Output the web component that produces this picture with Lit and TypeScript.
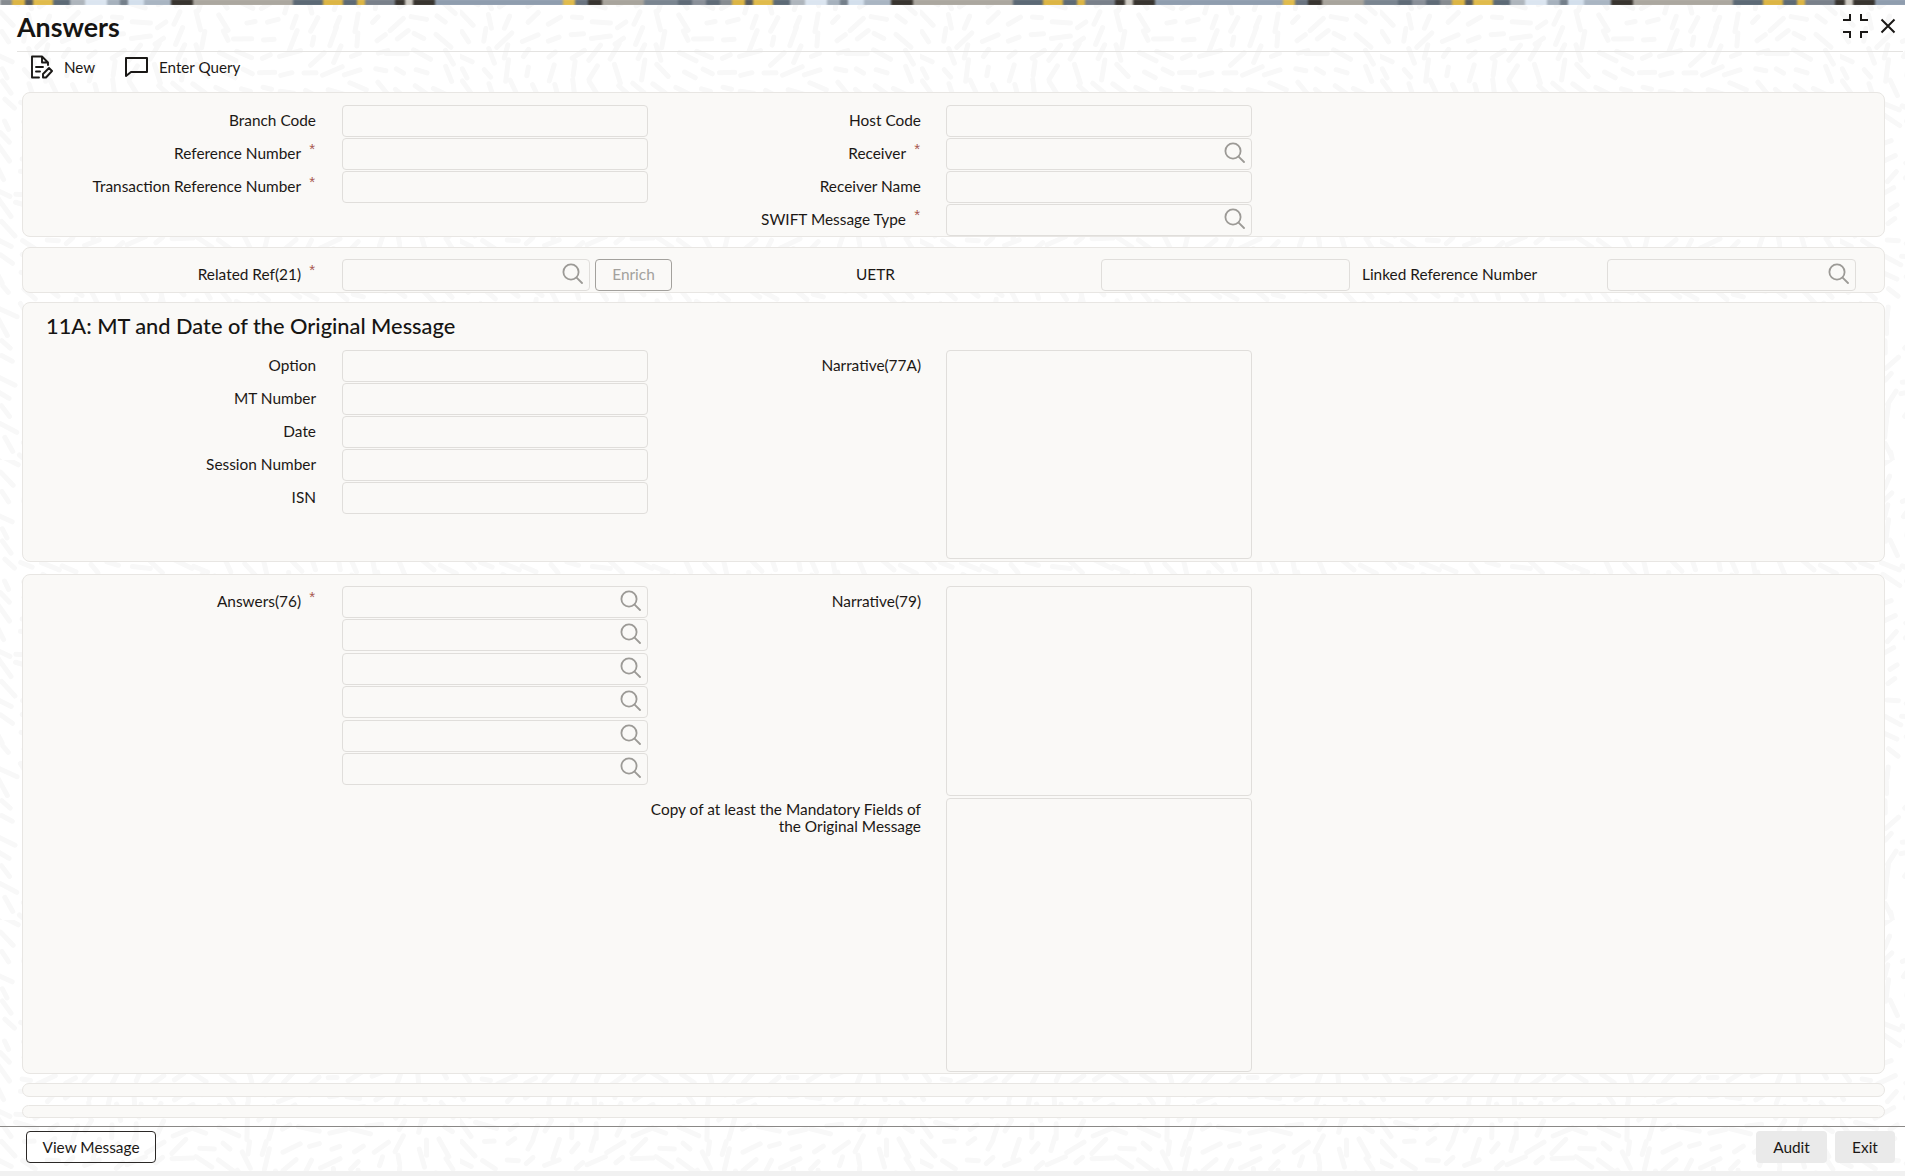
import { LitElement, html, css, svg, nothing } from "lit";
import { customElement } from "lit/decorators.js";

const bandSegs: [number, string][] = [
  [12, "#868b90"], [13, "#dcb544"], [8, "#56595c"], [20, "#e0bb4c"], [17, "#5d6a76"], [15, "#aeb5bc"],
  [22, "#dbe5f0"], [13, "#a6b1bd"], [8, "#747f8a"], [16, "#d3dfec"], [27, "#a9b5c2"], [22, "#38342f"],
  [100, "#aba79f"], [30, "#5c6975"], [20, "#dcb544"], [14, "#5c6975"], [8, "#dcb544"], [30, "#79808a"],
  [10, "#38342f"], [8, "#cfcbc4"], [22, "#38342f"], [128, "#8f9dae"], [12, "#e0bb4c"], [13, "#6a7480"],
  [14, "#38342f"], [42, "#a8a49c"], [34, "#7a8590"], [14, "#5f6b77"], [14, "#8a9099"], [14, "#5f6b77"],
];

const dashes = (() => {
  let s = 12345;
  const r = () => ((s = (s * 16807) % 2147483647) / 2147483647);
  const out: { x1: number; y1: number; x2: number; y2: number }[] = [];
  const size = 460;
  for (let gy = 0; gy < size; gy += 17) {
    for (let gx = 0; gx < size; gx += 22) {
      const flow = Math.sin(gx / 70) * Math.cos(gy / 60) * 2.4 + 0.8;
      const a = flow + (r() - 0.5) * 0.8;
      const l = 4 + r() * 7;
      const x = gx + r() * 10;
      const y = gy + r() * 8;
      out.push({ x1: x - Math.cos(a) * l, y1: y - Math.sin(a) * l, x2: x + Math.cos(a) * l, y2: y + Math.sin(a) * l });
    }
  }
  return out;
})();

const searchIcon = html`<svg class="search" viewBox="0 0 21 21" fill="none" stroke="#9c9a96" stroke-width="1.8" stroke-linecap="round"><circle cx="9" cy="9" r="7.6"></circle><path d="M14.6 14.6L20 20"></path></svg>`;

type Opt = { req?: boolean; search?: boolean };

@customElement("app-root")
export class AppRoot extends LitElement {
  static styles = css`
    :host {
      display: block;
      position: relative;
      height: 1176px;
      overflow: hidden;
      background: #fff;
      font-family: "Lato", "Noto Sans", sans-serif;
      font-size: 15.4px;
      color: #1c1815;
    }
    .backdrop { position: absolute; inset: 0; width: 100%; height: 100%; }
    .page { position: relative; display: flex; flex-direction: column; height: 100%; }
    .band { height: 5px; overflow: hidden; flex: none; }
    .band div { display: flex; height: 5px; filter: blur(0.8px); transform: scaleY(1.6); }
    .band span { flex: none; height: 100%; }
    .titlebar {
      height: 47px; margin-left: 17px; margin-right: 2px; border-bottom: 1px solid #e4e3e1; padding-bottom: 2px;
      display: flex; align-items: center; justify-content: space-between; flex: none; box-sizing: border-box;
    }
    h1 { margin: 0; font-size: 26.8px; font-weight: 700; line-height: 1; color: #161513; }
    .winctl { display: flex; align-items: center; gap: 12px; margin-right: 7px; margin-bottom: 2px; }
    .toolbar { height: 40px; padding-bottom: 10px; box-sizing: border-box; display: flex; align-items: center; padding-left: 30px; flex: none; font-size: 15.2px; }
    .tool { display: flex; align-items: center; }
    .tool.new { width: 95px; gap: 11px; }
    .tool.query { gap: 11px; }
    .panel {
      margin: 0 20px 0 22px; background: #faf9f7; border: 1px solid #e8e6e3; border-radius: 8px;
      box-sizing: border-box; flex: none;
    }
    .p1 { height: 145px; padding-top: 12px; }
    .p2 { height: 46px; margin-top: 10px; padding-top: 11px; }
    .p3 { height: 260px; margin-top: 9px; padding-top: 9px; }
    .p4 { height: 500px; margin-top: 12px; padding-top: 11px; }
    .thin { height: 14px; border-radius: 7px; }
    .t1 { margin-top: 9px; }
    .t2 { margin-top: 8px; height: 13px; }
    .cols { display: flex; }
    .col1 { width: 625px; flex: none; display: flex; flex-direction: column; gap: 1px; }
    .col2 { width: 604px; flex: none; display: flex; flex-direction: column; gap: 1px; }
    .answers { gap: 1.4px; }
    .row { display: flex; height: 32px; align-items: center; }
    .row.top { height: auto; align-items: flex-start; }
    .col1 .label { width: 293px; }
    .col2 .label { width: 273px; }
    .label {
      flex: none; display: flex; justify-content: flex-end; line-height: 17px; text-align: right; padding-bottom: 2px;
    }
    .row.top .label { padding-top: 7px; padding-bottom: 0; }
    .row.top.tight .label { padding-top: 3px; }
    .star { width: 15px; flex: none; color: #a8574f; font-size: 15px; line-height: 13px; text-align: right; padding-right: 1px; box-sizing: border-box; font-family: "Liberation Sans", sans-serif; margin-top: -3px; }
    .col1 .box { margin-left: 26px; }
    .col2 .box { margin-left: 25px; }
    .box {
      position: relative; width: 306px; height: 32px; box-sizing: border-box; flex: none;
      border: 1px solid #e0dedb; border-radius: 4px; background: #faf9f7;
    }
    .box input, textarea {
      display: block; width: 100%; height: 100%; border: 0; padding: 0 8px; margin: 0; box-sizing: border-box;
      background: transparent; outline: none; font: inherit; resize: none;
    }
    .search { position: absolute; right: 6px; top: 3px; width: 21px; height: 21px; }
    .area { height: 209px; }
    .area.a2 { height: 210px; }
    .area.a3 { height: 274px; }
    .stack { gap: 2px; }
    h2 { margin: 0 0 10px 23px; font-size: 21.8px; font-weight: 500; line-height: 28px; color: #161513; }
    .related { display: flex; align-items: center; height: 32px; }
    .related .label { width: 293px; }
    .related .box { margin-left: 26px; width: 248px; }
    .enrich {
      width: 77px; height: 32px; margin-left: 5px; box-sizing: border-box; border: 1px solid #a3a19d; border-radius: 4px;
      background: transparent; color: #a3a19d; font: inherit; padding: 0 0 2px;
    }
    .uetr { width: 429px; padding-left: 184px; padding-bottom: 2px; box-sizing: border-box; flex: none; }
    .related .uetr-box { margin-left: 0; width: 249px; }
    .linked { width: 257px; padding-left: 12px; padding-bottom: 2px; box-sizing: border-box; flex: none; }
    .footer {
      position: absolute; left: 0; right: 0; top: 1126px; height: 45px; border-top: 1px solid #8a8886; box-sizing: border-box;
      display: flex; align-items: flex-start; justify-content: space-between; padding: 4px 10px 0 26px;
    }
    .btn {
      height: 32px; box-sizing: border-box; border-radius: 4px; font: inherit; padding: 0; color: #1c1815; background: transparent;
    }
    .view { width: 130px; border: 1px solid #2b2826; }
    .right { display: flex; gap: 8px; }
    .audit, .exit { border: 0; background: #eaeaea; }
    .audit { width: 71px; }
    .exit { width: 60px; }
    .base { position: absolute; left: 0; right: 0; bottom: 0; height: 5px; background: #f1f1f1; }
  `;

  private field(label: string, o: Opt = {}) {
    return html`<div class="row">
      <div class="label"><span>${label}</span>${o.req ? html`<span class="star">*</span>` : nothing}</div>
      <div class="box"><input type="text" aria-label=${label} />${o.search ? searchIcon : nothing}</div>
    </div>`;
  }

  private area(label: string, cls: string, rowCls = "") {
    return html`<div class="row top ${rowCls}">
      <div class="label"><span>${label}</span></div>
      <div class="box area ${cls}"><textarea aria-label=${label}></textarea></div>
    </div>`;
  }

  render() {
    const segs = [...bandSegs, ...bandSegs, ...bandSegs];
    return html`
      <svg class="backdrop" aria-hidden="true">
        <defs>
          <pattern id="rice" width="460" height="460" patternUnits="userSpaceOnUse">
            ${dashes.map((d) => svg`<line x1=${d.x1} y1=${d.y1} x2=${d.x2} y2=${d.y2} stroke="#f8f8f8" stroke-width="5" stroke-linecap="round"></line>`)}
          </pattern>
        </defs>
        <rect width="100%" height="100%" fill="url(#rice)"></rect>
      </svg>
      <div class="page">
        <div class="band"><div>${segs.map(([w, c]) => html`<span style="width:${w}px;background:${c}"></span>`)}</div></div>
        <div class="titlebar">
          <h1>Answers</h1>
          <div class="winctl">
            <svg width="25" height="24" viewBox="0 0 25 24" fill="none" stroke="#1a1816" stroke-width="2">
              <path d="M0 6H7V0M18 0V6H25M25 18H18V24M7 24V18H0"></path>
            </svg>
            <svg width="16" height="16" viewBox="0 0 16 16" fill="none" stroke="#1a1816" stroke-width="2">
              <path d="M1.5 1.5L14.5 14.5M14.5 1.5L1.5 14.5"></path>
            </svg>
          </div>
        </div>
        <div class="toolbar">
          <div class="tool new">
            <svg width="23" height="24" viewBox="0 0 23 24" fill="none" stroke="#1a1816" stroke-width="1.9" stroke-linejoin="round" stroke-linecap="round">
              <path d="M9 22.5H2V1.5H12L18 7.5V10M12 1.5V7.5H18"></path>
              <path d="M6 12H13M6 16.5H10"></path>
              <path d="M13 22.5V19L19 13L22 16L16 22.5Z"></path>
            </svg>
            <span>New</span>
          </div>
          <div class="tool query">
            <svg width="23" height="20" viewBox="0 0 23 20" fill="none" stroke="#1a1816" stroke-width="2" stroke-linejoin="round">
              <path d="M1 1H22V15H6L1 19Z"></path>
            </svg>
            <span>Enter Query</span>
          </div>
        </div>
        <section class="panel p1">
          <div class="cols">
            <div class="col1">
              ${this.field("Branch Code")}
              ${this.field("Reference Number", { req: true })}
              ${this.field("Transaction Reference Number", { req: true })}
            </div>
            <div class="col2">
              ${this.field("Host Code")}
              ${this.field("Receiver", { req: true, search: true })}
              ${this.field("Receiver Name")}
              ${this.field("SWIFT Message Type", { req: true, search: true })}
            </div>
          </div>
        </section>
        <section class="panel p2">
          <div class="related">
            <div class="label"><span>Related Ref(21)</span><span class="star">*</span></div>
            <div class="box"><input type="text" aria-label="Related Ref(21)" />${searchIcon}</div>
            <button class="enrich">Enrich</button>
            <div class="uetr">UETR</div>
            <div class="box uetr-box"><input type="text" aria-label="UETR" /></div>
            <div class="linked">Linked Reference Number</div>
            <div class="box uetr-box"><input type="text" aria-label="Linked Reference Number" />${searchIcon}</div>
          </div>
        </section>
        <section class="panel p3">
          <h2>11A: MT and Date of the Original Message</h2>
          <div class="cols">
            <div class="col1">
              ${this.field("Option")}
              ${this.field("MT Number")}
              ${this.field("Date")}
              ${this.field("Session Number")}
              ${this.field("ISN")}
            </div>
            <div class="col2">${this.area("Narrative(77A)", "")}</div>
          </div>
        </section>
        <section class="panel p4">
          <div class="cols">
            <div class="col1 answers">
              ${this.field("Answers(76)", { req: true, search: true })}
              ${[1, 2, 3, 4, 5].map(() => this.field("", { search: true }))}
            </div>
            <div class="col2 stack">
              ${this.area("Narrative(79)", "a2")}
              ${this.area("Copy of at least the Mandatory Fields of the Original Message", "a3", "tight")}
            </div>
          </div>
        </section>
        <div class="panel thin t1"></div>
        <div class="panel thin t2"></div>
        <div class="footer">
          <button class="btn view">View Message</button>
          <div class="right"><button class="btn audit">Audit</button><button class="btn exit">Exit</button></div>
        </div>
        <div class="base"></div>
      </div>
    `;
  }
}
